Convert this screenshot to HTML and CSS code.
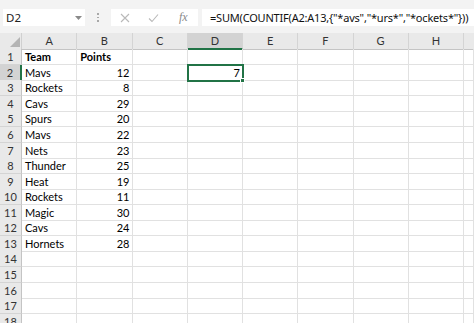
FILE: index.html
```html
<!DOCTYPE html>
<html>
<head>
<meta charset="utf-8">
<link rel="stylesheet" href="styles.css">
</head>
<body>
<div class="toolbar">
  <div class="namebox"><span class="nb-text">D2</span><svg class="nb-arrow" width="7" height="4" viewBox="0 0 7 4"><path d="M0 0H7L3.5 4Z" fill="#8a8a8a"/></svg></div>
  <div class="grip"><i></i><i></i><i></i></div>
  <div class="fxbox">
    <svg class="ic" width="10" height="10" viewBox="0 0 10 10"><path d="M1 1L9 9M9 1L1 9" stroke="#b9b9b9" stroke-width="1.1" fill="none"/></svg>
    <svg class="ic" width="11" height="10" viewBox="0 0 11 10"><path d="M1 5.5L4 8.5L10 1.5" stroke="#b9b9b9" stroke-width="1.1" fill="none"/></svg>
    <span class="fx">fx</span>
  </div>
  <div class="formula">=SUM(COUNTIF(A2:A13,{"*avs","*urs*","*ockets*"}))</div>
</div>
<div class="sheet">
  <div class="row head">
    <div class="corner"><svg width="10" height="10" viewBox="0 0 10 10"><path d="M10 0V10H0Z" fill="#b4b4b4"/></svg></div>
    <div class="ch">A</div><div class="ch">B</div><div class="ch">C</div><div class="ch sel">D</div><div class="ch">E</div><div class="ch">F</div><div class="ch">G</div><div class="ch">H</div><div class="ch last"></div>
  </div>
  <div class="row"><div class="rh">1</div><div class="c b">Team</div><div class="c b">Points</div><div class="c"></div><div class="c"></div><div class="c"></div><div class="c"></div><div class="c"></div><div class="c"></div><div class="c"></div></div>
  <div class="row"><div class="rh sel">2</div><div class="c">Mavs</div><div class="c n">12</div><div class="c"></div><div class="c n active">7<span class="handle"></span></div><div class="c"></div><div class="c"></div><div class="c"></div><div class="c"></div><div class="c"></div></div>
  <div class="row"><div class="rh">3</div><div class="c">Rockets</div><div class="c n">8</div><div class="c"></div><div class="c"></div><div class="c"></div><div class="c"></div><div class="c"></div><div class="c"></div><div class="c"></div></div>
  <div class="row"><div class="rh">4</div><div class="c">Cavs</div><div class="c n">29</div><div class="c"></div><div class="c"></div><div class="c"></div><div class="c"></div><div class="c"></div><div class="c"></div><div class="c"></div></div>
  <div class="row"><div class="rh">5</div><div class="c">Spurs</div><div class="c n">20</div><div class="c"></div><div class="c"></div><div class="c"></div><div class="c"></div><div class="c"></div><div class="c"></div><div class="c"></div></div>
  <div class="row"><div class="rh">6</div><div class="c">Mavs</div><div class="c n">22</div><div class="c"></div><div class="c"></div><div class="c"></div><div class="c"></div><div class="c"></div><div class="c"></div><div class="c"></div></div>
  <div class="row"><div class="rh">7</div><div class="c">Nets</div><div class="c n">23</div><div class="c"></div><div class="c"></div><div class="c"></div><div class="c"></div><div class="c"></div><div class="c"></div><div class="c"></div></div>
  <div class="row"><div class="rh">8</div><div class="c">Thunder</div><div class="c n">25</div><div class="c"></div><div class="c"></div><div class="c"></div><div class="c"></div><div class="c"></div><div class="c"></div><div class="c"></div></div>
  <div class="row"><div class="rh">9</div><div class="c">Heat</div><div class="c n">19</div><div class="c"></div><div class="c"></div><div class="c"></div><div class="c"></div><div class="c"></div><div class="c"></div><div class="c"></div></div>
  <div class="row"><div class="rh">10</div><div class="c">Rockets</div><div class="c n">11</div><div class="c"></div><div class="c"></div><div class="c"></div><div class="c"></div><div class="c"></div><div class="c"></div><div class="c"></div></div>
  <div class="row"><div class="rh">11</div><div class="c">Magic</div><div class="c n">30</div><div class="c"></div><div class="c"></div><div class="c"></div><div class="c"></div><div class="c"></div><div class="c"></div><div class="c"></div></div>
  <div class="row"><div class="rh">12</div><div class="c">Cavs</div><div class="c n">24</div><div class="c"></div><div class="c"></div><div class="c"></div><div class="c"></div><div class="c"></div><div class="c"></div><div class="c"></div></div>
  <div class="row"><div class="rh">13</div><div class="c">Hornets</div><div class="c n">28</div><div class="c"></div><div class="c"></div><div class="c"></div><div class="c"></div><div class="c"></div><div class="c"></div><div class="c"></div></div>
  <div class="row"><div class="rh">14</div><div class="c"></div><div class="c"></div><div class="c"></div><div class="c"></div><div class="c"></div><div class="c"></div><div class="c"></div><div class="c"></div><div class="c"></div></div>
  <div class="row"><div class="rh">15</div><div class="c"></div><div class="c"></div><div class="c"></div><div class="c"></div><div class="c"></div><div class="c"></div><div class="c"></div><div class="c"></div><div class="c"></div></div>
  <div class="row"><div class="rh">16</div><div class="c"></div><div class="c"></div><div class="c"></div><div class="c"></div><div class="c"></div><div class="c"></div><div class="c"></div><div class="c"></div><div class="c"></div></div>
  <div class="row"><div class="rh">17</div><div class="c"></div><div class="c"></div><div class="c"></div><div class="c"></div><div class="c"></div><div class="c"></div><div class="c"></div><div class="c"></div><div class="c"></div></div>
  <div class="row"><div class="rh">18</div><div class="c"></div><div class="c"></div><div class="c"></div><div class="c"></div><div class="c"></div><div class="c"></div><div class="c"></div><div class="c"></div><div class="c"></div></div>
</div>
</body>
</html>
```
FILE: styles.css
```css
* { box-sizing: border-box; }
html, body { margin: 0; padding: 0; }
body {
  width: 474px;
  height: 323px;
  overflow: hidden;
  background: #ffffff;
  font-family: "Lato", "Noto Sans", sans-serif;
  color: #000;
}
.toolbar {
  height: 33px;
  background: #f3f3f3;
  display: flex;
  align-items: flex-start;
  padding-top: 9px;
}
.namebox {
  margin-left: 3px;
  width: 82px;
  height: 17px;
  background: #fff;
  display: flex;
  align-items: center;
  justify-content: space-between;
  padding: 0 3px 0 3px;
  font-family: "Noto Sans", sans-serif;
  font-size: 11.5px;
  color: #222;
}
.nb-arrow { margin-top: 1px; }
.grip {
  width: 26px;
  height: 17px;
  display: flex;
  flex-direction: column;
  align-items: center;
  justify-content: center;
  gap: 2px;
}
.grip i {
  display: block;
  width: 1.5px;
  height: 1.5px;
  background: #a8a8a8;
}
.fxbox {
  width: 87px;
  height: 17px;
  background: #fff;
  display: flex;
  align-items: center;
  padding-left: 9px;
  gap: 18px;
}
.fx {
  font-family: "Liberation Serif", serif;
  font-style: italic;
  font-size: 12px;
  color: #8a8a8a;
  margin-left: 2px;
}
.formula {
  margin-left: 4px;
  flex: 1;
  height: 17px;
  background: #fff;
  font-family: "Noto Sans", sans-serif;
  font-size: 11px;
  letter-spacing: -0.2px;
  line-height: 17px;
  padding-left: 8px;
  color: #111;
  white-space: nowrap;
  overflow: hidden;
}
.sheet { display: flex; flex-direction: column; }
.row {
  display: grid;
  grid-template-columns: 22px repeat(8, 55.25px) 1fr;
  height: 15.55px;
  flex: none;
}
.row.head { height: 16.3px; background: #e9e9e9; }
.corner {
  border-right: 1px solid #d0d0d0;
  border-bottom: 1px solid #c4c4c4;
  display: flex;
  align-items: flex-end;
  justify-content: flex-end;
  padding: 0 1px 2px 0;
}
.ch {
  border-right: 1px solid #d4d4d4;
  border-bottom: 1px solid #c4c4c4;
  font-size: 11px;
  color: #333;
  text-align: center;
  line-height: 15px;
}
.ch.sel {
  background: #d3d3d3;
  border-bottom: 2px solid #217346;
}
.ch.last { border-right: none; }
.rh {
  background: #e9e9e9;
  border-right: 1px solid #c4c4c4;
  border-bottom: 1px solid #d4d4d4;
  font-size: 11px;
  color: #333;
  text-align: center;
  line-height: 15px;
}
.rh.sel {
  background: #d3d3d3;
  border-right: 2px solid #217346;
}
.c {
  position: relative;
  border-right: 1px solid #e1e1e1;
  border-bottom: 1px solid #e1e1e1;
  font-size: 11px;
  line-height: 15px;
  padding: 0 2px 0 3px;
  white-space: nowrap;
}
.c.b { font-weight: bold; }
.c.n { text-align: right; }
.c.active {
  outline: 2px solid #217346;
  outline-offset: -1px;
  z-index: 1;
}
.handle {
  position: absolute;
  right: -3px;
  bottom: -3px;
  width: 5px;
  height: 5px;
  background: #217346;
  border: 1px solid #fff;
}
```
